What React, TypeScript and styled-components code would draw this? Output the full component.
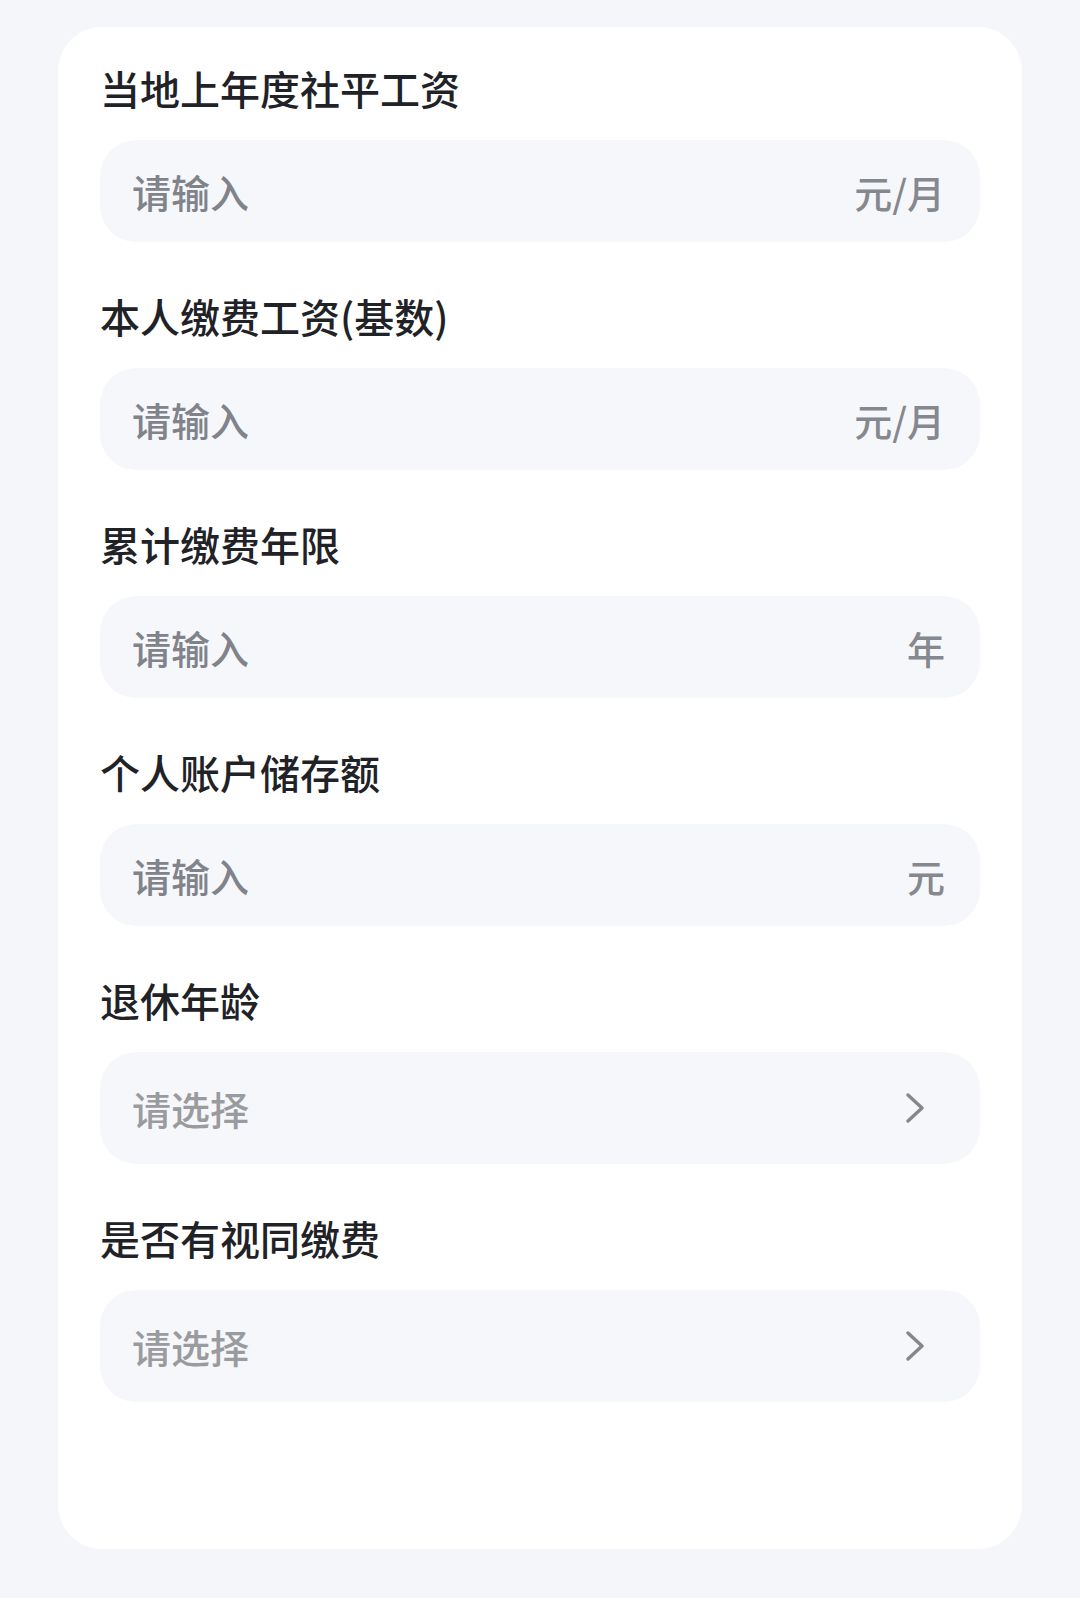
import React, { useState } from 'react';
import styled, { createGlobalStyle } from 'styled-components';

const GlobalStyle = createGlobalStyle`
  html, body {
    margin: 0;
    padding: 0;
    background: #ffffff;
    font-family: "Noto Sans CJK SC", "Noto Sans", sans-serif;
  }
  * {
    box-sizing: border-box;
  }
`;

const Page = styled.div`
  background: #f5f6fa;
  padding: 27px 58px 49px;
`;

const Card = styled.div`
  background: #ffffff;
  border-radius: 44px;
  padding: 37px 42px 147px;
  display: flex;
  flex-direction: column;
  gap: 50px;
`;

const Field = styled.div`
  display: flex;
  flex-direction: column;
  gap: 28px;
`;

const Label = styled.div`
  font-size: 40px;
  line-height: 48px;
  font-weight: 500;
  color: #1f2226;
`;

const InputBox = styled.div<{ $tall?: boolean }>`
  display: flex;
  align-items: center;
  height: ${p => (p.$tall ? 112 : 102)}px;
  padding: 0 ${p => (p.$tall ? 55 : 35)}px 0 32px;
  background: #f6f7fa;
  border-radius: 36px;
  cursor: ${p => (p.$tall ? 'pointer' : 'text')};
`;

const Input = styled.input`
  flex: 1;
  min-width: 0;
  border: none;
  outline: none;
  background: transparent;
  font-family: inherit;
  font-size: 39px;
  font-weight: 500;
  color: #1f2226;
  padding: 0;

  &::placeholder {
    color: #80838a;
  }
`;

const Suffix = styled.span`
  font-size: 38px;
  font-weight: 500;
  color: #85888e;
`;

const SelectText = styled.span<{ $filled?: boolean }>`
  flex: 1;
  font-size: 39px;
  font-weight: 500;
  color: ${p => (p.$filled ? '#1f2226' : '#9a9b9e')};
`;

const Chevron = () => (
  <svg width="20" height="30" viewBox="0 0 20 30" fill="none">
    <path d="M3 2 L17 15 L3 28" stroke="#85878b" strokeWidth="3.4" strokeLinecap="round" strokeLinejoin="round" />
  </svg>
);

const inputFields = [
  { key: 'avgWage', label: '当地上年度社平工资', unit: '元/月' },
  { key: 'baseWage', label: '本人缴费工资(基数)', unit: '元/月' },
  { key: 'years', label: '累计缴费年限', unit: '年' },
  { key: 'account', label: '个人账户储存额', unit: '元' },
];

const selectFields = [
  { key: 'retireAge', label: '退休年龄' },
  { key: 'deemed', label: '是否有视同缴费' },
];

const App: React.FC = () => {
  const [values, setValues] = useState<Record<string, string>>({});

  return (
    <>
      <GlobalStyle />
      <Page>
        <Card>
          {inputFields.map(f => (
            <Field key={f.key}>
              <Label>{f.label}</Label>
              <InputBox>
                <Input
                  placeholder="请输入"
                  inputMode="decimal"
                  value={values[f.key] || ''}
                  onChange={e => setValues({ ...values, [f.key]: e.target.value })}
                />
                <Suffix>{f.unit}</Suffix>
              </InputBox>
            </Field>
          ))}
          {selectFields.map(f => (
            <Field key={f.key}>
              <Label>{f.label}</Label>
              <InputBox $tall>
                <SelectText $filled={!!values[f.key]}>{values[f.key] || '请选择'}</SelectText>
                <Chevron />
              </InputBox>
            </Field>
          ))}
        </Card>
      </Page>
    </>
  );
};

export default App;
